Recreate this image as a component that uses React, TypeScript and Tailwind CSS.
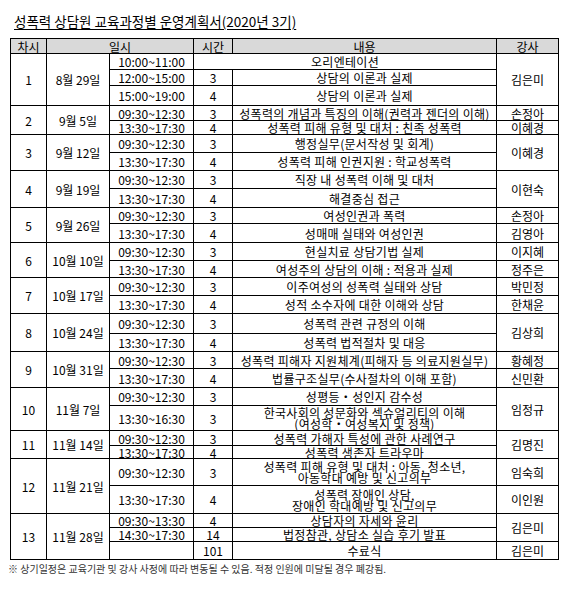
import React from "react"

type Sub = {
  h: string
  time: string
  hours?: string
  content: string
  merge?: boolean
  lect?: [string, number]
}

type Session = { no: string; date: string; subs: Sub[] }

const sessions: Session[] = [
  {
    no: "1",
    date: "8월 29일",
    subs: [
      { h: "h-[16px]", time: "10:00~11:00", content: "오리엔테이션", merge: true, lect: ["김은미", 3] },
      { h: "h-[16px]", time: "12:00~15:00", hours: "3", content: "상담의 이론과 실제" },
      { h: "h-[20px]", time: "15:00~19:00", hours: "4", content: "상담의 이론과 실제" },
    ],
  },
  {
    no: "2",
    date: "9월 5일",
    subs: [
      { h: "h-[15px]", time: "09:30~12:30", hours: "3", content: "성폭력의 개념과 특징의 이해(권력과 젠더의 이해)", lect: ["손정아", 1] },
      { h: "h-[14px]", time: "13:30~17:30", hours: "4", content: "성폭력 피해 유형 및 대처 : 친족 성폭력", lect: ["이혜경", 1] },
    ],
  },
  {
    no: "3",
    date: "9월 12일",
    subs: [
      { h: "h-[18px]", time: "09:30~12:30", hours: "3", content: "행정실무(문서작성 및 회계)", lect: ["이혜경", 2] },
      { h: "h-[18px]", time: "13:30~17:30", hours: "4", content: "성폭력 피해 인권지원 : 학교성폭력" },
    ],
  },
  {
    no: "4",
    date: "9월 19일",
    subs: [
      { h: "h-[18px]", time: "09:30~12:30", hours: "3", content: "직장 내 성폭력 이해 및 대처", lect: ["이현숙", 2] },
      { h: "h-[19px]", time: "13:30~17:30", hours: "4", content: "해결중심 접근" },
    ],
  },
  {
    no: "5",
    date: "9월 26일",
    subs: [
      { h: "h-[16px]", time: "09:30~12:30", hours: "3", content: "여성인권과 폭력", lect: ["손정아", 1] },
      { h: "h-[19px]", time: "13:30~17:30", hours: "4", content: "성매매 실태와 여성인권", lect: ["김영아", 1] },
    ],
  },
  {
    no: "6",
    date: "10월 10일",
    subs: [
      { h: "h-[18px]", time: "09:30~12:30", hours: "3", content: "현실치료 상담기법 실제", lect: ["이지혜", 1] },
      { h: "h-[17px]", time: "13:30~17:30", hours: "4", content: "여성주의 상담의 이해 : 적용과 실제", lect: ["정주은", 1] },
    ],
  },
  {
    no: "7",
    date: "10월 17일",
    subs: [
      { h: "h-[18px]", time: "09:30~12:30", hours: "3", content: "이주여성의 성폭력 실태와 상담", lect: ["박민정", 1] },
      { h: "h-[18px]", time: "13:30~17:30", hours: "4", content: "성적 소수자에 대한 이해와 상담", lect: ["한채윤", 1] },
    ],
  },
  {
    no: "8",
    date: "10월 24일",
    subs: [
      { h: "h-[20px]", time: "09:30~12:30", hours: "3", content: "성폭력 관련 규정의 이해", lect: ["김상희", 2] },
      { h: "h-[18px]", time: "13:30~17:30", hours: "4", content: "성폭력 법적절차 및 대응" },
    ],
  },
  {
    no: "9",
    date: "10월 31일",
    subs: [
      { h: "h-[17px]", time: "09:30~12:30", hours: "3", content: "성폭력 피해자 지원체계(피해자 등 의료지원실무)", lect: ["황혜정", 1] },
      { h: "h-[19px]", time: "13:30~17:30", hours: "4", content: "법률구조실무(수사절차의 이해 포함)", lect: ["신민환", 1] },
    ],
  },
  {
    no: "10",
    date: "11월 7일",
    subs: [
      { h: "h-[18px]", time: "09:30~12:30", hours: "3", content: "성평등・성인지 감수성", lect: ["임정규", 2] },
      { h: "h-[25px]", time: "13:30~16:30", hours: "3", content: "한국사회의 성문화와 섹슈얼리티의 이해\n(여성학・여성복지 및 정책)" },
    ],
  },
  {
    no: "11",
    date: "11월 14일",
    subs: [
      { h: "h-[15px]", time: "09:30~12:30", hours: "3", content: "성폭력 가해자 특성에 관한 사례연구", lect: ["김명진", 2] },
      { h: "h-[13px]", time: "13:30~17:30", hours: "4", content: "성폭력 생존자 트라우마" },
    ],
  },
  {
    no: "12",
    date: "11월 21일",
    subs: [
      { h: "h-[27px]", time: "09:30~12:30", hours: "3", content: "성폭력 피해 유형 및 대처 : 아동, 청소년,\n아동학대 예방 및 신고의무", lect: ["임숙희", 1] },
      { h: "h-[28px]", time: "13:30~17:30", hours: "4", content: "성폭력 장애인 상담,\n장애인 학대예방 및 신고의무", lect: ["이인원", 1] },
    ],
  },
  {
    no: "13",
    date: "11월 28일",
    subs: [
      { h: "h-[14px]", time: "09:30~13:30", hours: "4", content: "상담자의 자세와 윤리", lect: ["김은미", 2] },
      { h: "h-[14px]", time: "14:30~17:30", hours: "14", content: "법정참관, 상담소 실습 후기 발표" },
      { h: "h-[18px]", time: "", hours: "101", content: "수료식", lect: ["김은미", 1] },
    ],
  },
]

const cell = "border border-black p-0 text-center align-middle text-[12px] leading-[11px] text-black"
const contentCell = "border border-black p-0 text-center align-middle text-[12px] leading-[11px] text-black whitespace-pre-line tracking-[0.3px]"

export default function App() {
  return (
    <div className="w-[561px] h-[590px] bg-white font-['Noto_Sans_CJK_KR','Noto_Sans',sans-serif] text-black">
      <div className="h-[38px] pl-[14px] pt-[8px]">
        <span className="text-[13.5px] leading-[16px] underline underline-offset-2">
          성폭력 상담원 교육과정별 운영계획서(2020년 3기)
        </span>
      </div>
      <table className="ml-[10px] w-[548px] table-fixed border-collapse border border-black">
        <colgroup>
          <col className="w-[36px]" />
          <col className="w-[63px]" />
          <col className="w-[84px]" />
          <col className="w-[39px]" />
          <col className="w-[264px]" />
          <col className="w-[62px]" />
        </colgroup>
        <thead>
          <tr className="h-[15px] bg-[#d9d9d9]">
            <th className={cell + " font-normal"}>차시</th>
            <th className={cell + " font-normal"} colSpan={2}>일시</th>
            <th className={cell + " font-normal"}>시간</th>
            <th className={cell + " font-normal"}>내용</th>
            <th className={cell + " font-normal"}>강사</th>
          </tr>
        </thead>
        <tbody>
          {sessions.map((s) =>
            s.subs.map((sub, i) => (
              <tr key={s.no + "-" + i} className={sub.h}>
                {i === 0 && (
                  <td className={cell} rowSpan={s.subs.length}>
                    {s.no}
                  </td>
                )}
                {i === 0 && (
                  <td className={cell} rowSpan={s.subs.length}>
                    {s.date}
                  </td>
                )}
                <td className={cell}>{sub.time}</td>
                {sub.merge ? (
                  <td className={contentCell} colSpan={2}>
                    {sub.content}
                  </td>
                ) : (
                  <>
                    <td className={cell}>{sub.hours}</td>
                    <td className={contentCell}>{sub.content}</td>
                  </>
                )}
                {sub.lect && (
                  <td className={cell} rowSpan={sub.lect[1]}>
                    {sub.lect[0]}
                  </td>
                )}
              </tr>
            ))
          )}
        </tbody>
      </table>
      <p className="pl-[8px] pt-[3px] text-[10px] leading-[12px] text-[#333]">
        ※ 상기일정은 교육기관 및 강사 사정에 따라 변동될 수 있음. 적정 인원에 미달될 경우 폐강됨.
      </p>
    </div>
  )
}
